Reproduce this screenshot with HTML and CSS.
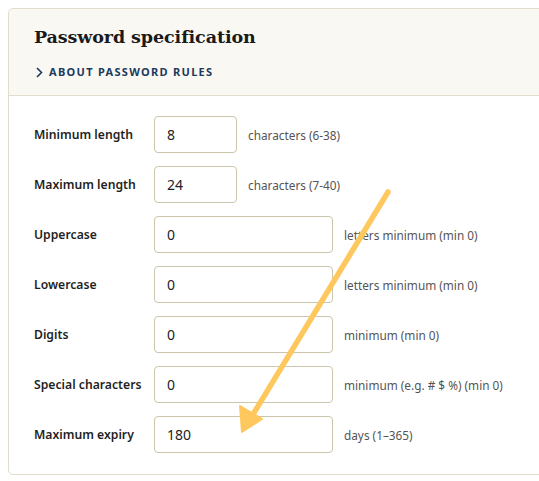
FILE: index.html
```html
<!DOCTYPE html>
<html>
<head>
<meta charset="utf-8">
<link rel="stylesheet" href="styles.css">
</head>
<body>
<section class="card">
  <header class="card-head">
    <h2 class="title">Password specification</h2>
    <a class="about" href="#"><svg class="chev" width="7" height="11" viewBox="0 0 7 11"><path d="M1 1 L5.5 5.5 L1 10" fill="none" stroke="#1c3a5e" stroke-width="1.6"/></svg>ABOUT PASSWORD RULES</a>
  </header>
  <div class="card-body">
    <div class="row"><label class="lbl">Minimum length</label><input class="inp short" value="8"><span class="hint">characters (6-38)</span></div>
    <div class="row"><label class="lbl">Maximum length</label><input class="inp short" value="24"><span class="hint">characters (7-40)</span></div>
    <div class="row"><label class="lbl">Uppercase</label><input class="inp wide" value="0"><span class="hint">letters minimum (min 0)</span></div>
    <div class="row"><label class="lbl">Lowercase</label><input class="inp wide" value="0"><span class="hint">letters minimum (min 0)</span></div>
    <div class="row"><label class="lbl">Digits</label><input class="inp wide" value="0"><span class="hint">minimum (min 0)</span></div>
    <div class="row"><label class="lbl">Special characters</label><input class="inp wide" value="0"><span class="hint">minimum (e.g. # $ %) (min 0)</span></div>
    <div class="row"><label class="lbl">Maximum expiry</label><input class="inp wide" value="180"><span class="hint">days (1–365)</span></div>
  </div>
</section>
<svg class="arrow" width="539" height="481" viewBox="0 0 539 481">
  <line x1="388" y1="192" x2="252" y2="416" stroke="#ffc85f" stroke-width="5.5" stroke-linecap="round"/>
  <polygon points="242,432 240,406 262,419" fill="#ffc85f" stroke="#ffc85f" stroke-width="2" stroke-linejoin="round"/>
</svg>
</body>
</html>
```
FILE: styles.css
```css
html, body { margin: 0; padding: 0; overflow: hidden; background: #fff; }
body { padding: 8px 0 0 8px; width: 539px; height: 481px; box-sizing: border-box; position: relative; font-family: "Noto Sans", "Open Sans", sans-serif; }
.card { width: 580px; border: 1px solid #e2ddca; border-radius: 5px; background: #fff; }
.card-head { background: #faf8f3; border-bottom: 1px solid #e2ddca; border-radius: 5px 5px 0 0; padding: 14px 25px 15px; height: 57px; }
.title { margin: 0; font-family: "DejaVu Serif", Georgia, serif; font-weight: bold; font-size: 17.5px; color: #1a1a1a; line-height: 28px; letter-spacing: -0.1px; }
.about { display: flex; align-items: center; gap: 6px; margin-top: 14px; font-size: 11px; font-weight: 700; letter-spacing: 1.3px; color: #1c3a5e; text-decoration: none; line-height: 14px; padding-left: 2px; }
.card-body { padding: 20px 25px 21px; display: flex; flex-direction: column; gap: 13px; }
.row { display: flex; align-items: center; height: 37px; }
.lbl { width: 120px; font-size: 12.2px; font-weight: 600; color: #1f1f1f; }
.inp { box-sizing: border-box; height: 37px; border: 1px solid #cbc5ab; border-radius: 4px; padding: 0 12px; font-family: inherit; font-size: 14px; color: #222; background: #fff; margin: 0; }
.short { width: 83px; }
.wide { width: 179px; }
.hint { margin-left: 11px; font-size: 11.8px; color: #555; }
.arrow { position: absolute; left: 0; top: 0; pointer-events: none; }
```
